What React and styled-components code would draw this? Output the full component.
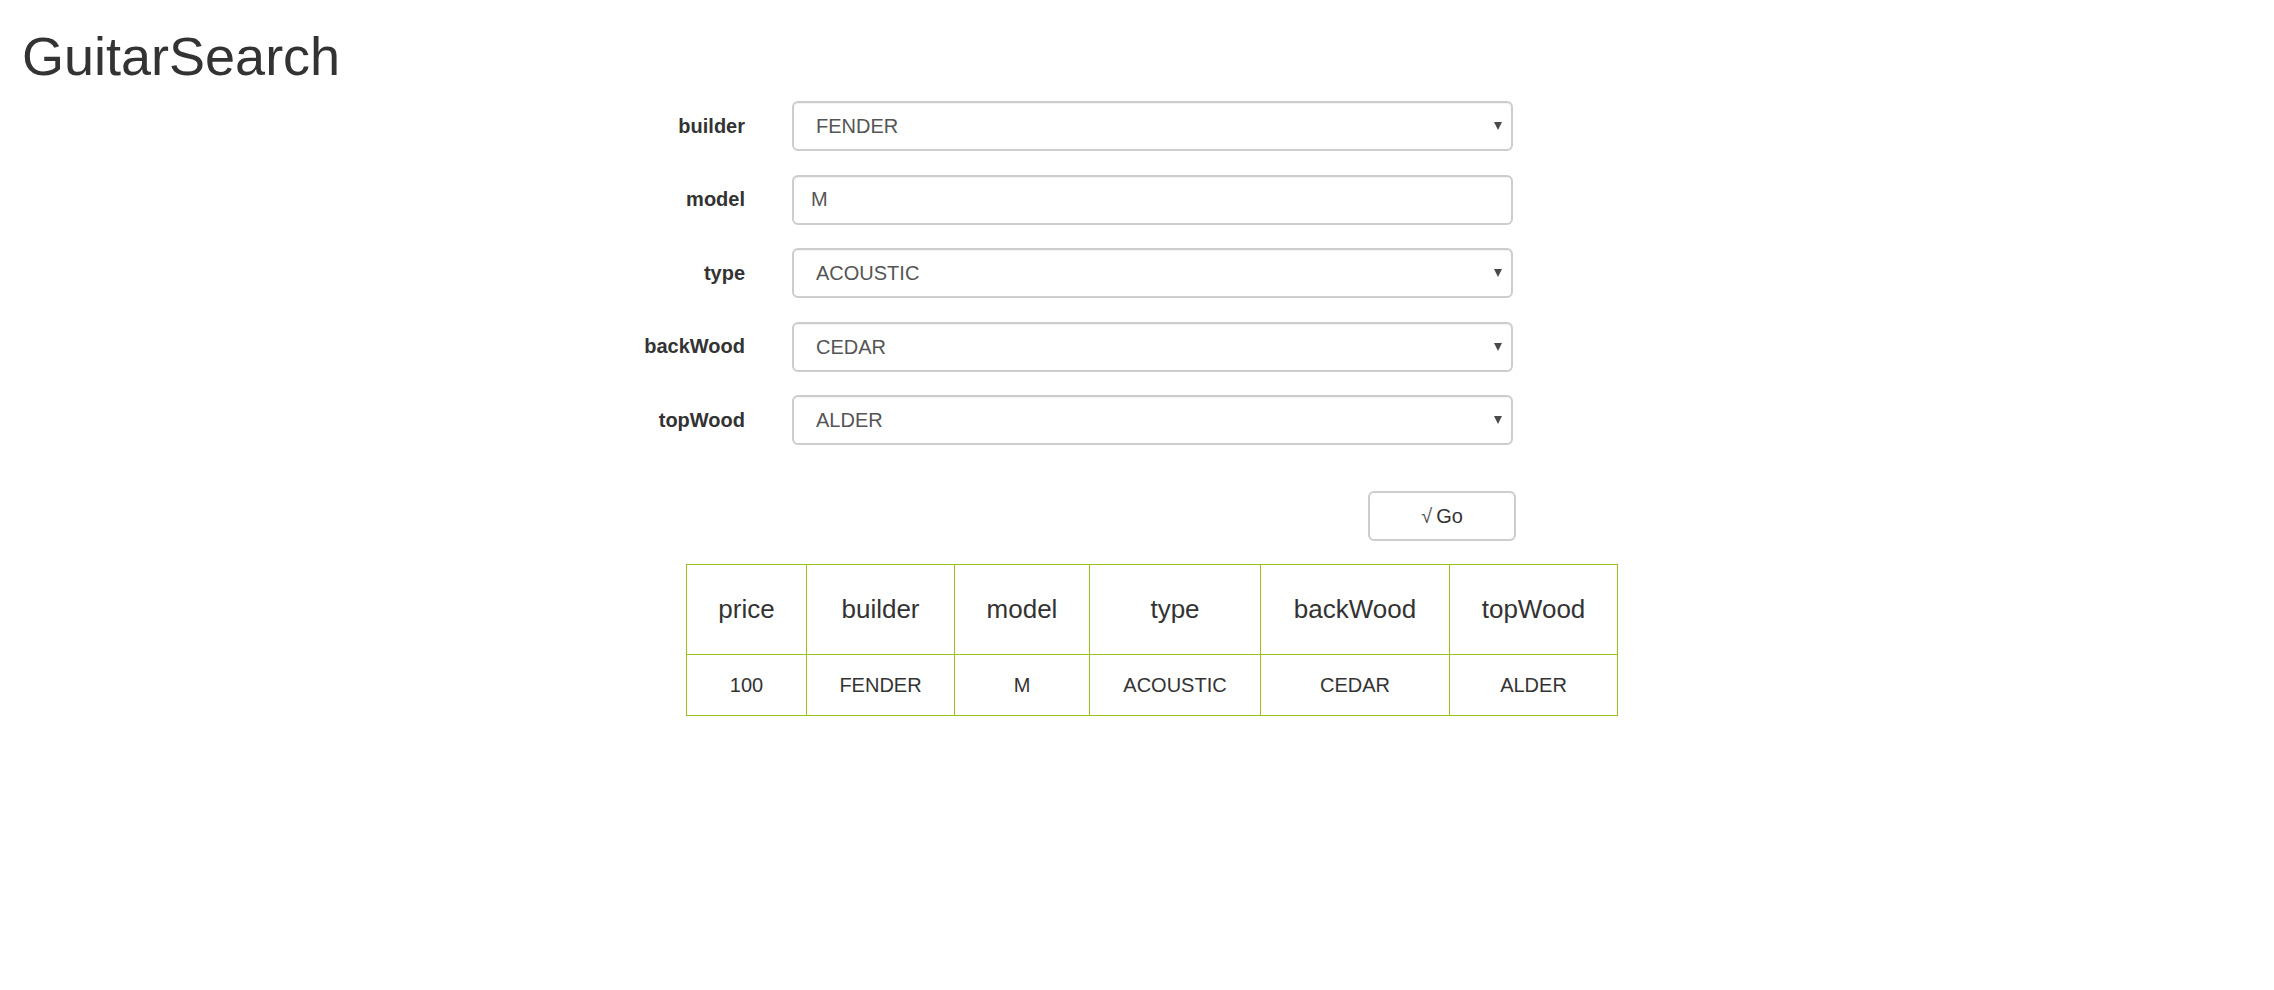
import React from "react";
import styled, { createGlobalStyle } from "styled-components";

const GlobalStyle = createGlobalStyle`
  html, body {
    margin: 0;
    padding: 0;
    background: #ffffff;
  }
  body {
    font-family: "Liberation Sans", Arial, Helvetica, sans-serif;
    color: #333333;
  }
  * { box-sizing: border-box; }
`;

const Page = styled.div`
  padding: 27px 0 40px 22px;
`;

const Title = styled.h1`
  margin: 0;
  font-size: 54px;
  line-height: 58px;
  font-weight: 400;
  color: #333333;
`;

const Content = styled.div`
  margin-top: 16px;
  margin-left: 578px;
  width: 916px;
  display: flex;
  flex-direction: column;
`;

const Form = styled.form`
  display: flex;
  flex-direction: column;
  gap: 23.6px;
`;

const Row = styled.div`
  display: flex;
  align-items: center;
  gap: 47px;
  height: 50px;
`;

const Label = styled.label`
  width: 145px;
  text-align: right;
  font-size: 20px;
  font-weight: 700;
  color: #333333;
`;

const fieldBase = `
  width: 721px;
  height: 50px;
  border: 2px solid #cdcdcd;
  border-radius: 6px;
  background: #ffffff;
  font-family: "Liberation Sans", Arial, Helvetica, sans-serif;
  font-size: 20px;
  color: #555555;
  outline: none;
  box-shadow: inset 0 1px 1px rgba(0, 0, 0, 0.06);
`;

const TextInput = styled.input`
  ${fieldBase}
  padding: 0 17px;
`;

const SelectWrap = styled.div`
  position: relative;
  width: 721px;
  height: 50px;
  &::after {
    content: "";
    position: absolute;
    right: 11px;
    top: 21px;
    width: 0;
    height: 0;
    border-left: 4.5px solid transparent;
    border-right: 4.5px solid transparent;
    border-top: 8px solid #4a4a4a;
    pointer-events: none;
  }
`;

const Select = styled.select`
  ${fieldBase}
  appearance: none;
  -webkit-appearance: none;
  padding: 0 40px 0 22px;
`;

const ButtonRow = styled.div`
  display: flex;
  justify-content: flex-end;
  margin-top: 46px;
`;

const GoButton = styled.button`
  width: 148px;
  height: 50px;
  border: 2px solid #cdcdcd;
  border-radius: 6px;
  background: #ffffff;
  font-family: "Liberation Sans", Arial, Helvetica, sans-serif;
  font-size: 20px;
  color: #333333;
  cursor: pointer;
`;

const Check = styled.span`
  color: #555555;
  margin-right: 4px;
`;

const Table = styled.table`
  align-self: flex-start;
  flex-shrink: 0;
  width: 931px;
  min-width: 931px;
  margin-top: 23px;
  margin-left: 86px;
  border-collapse: collapse;
  table-layout: fixed;
`;

const HeadCell = styled.th`
  width: ${(p) => p.$w}px;
  height: 90px;
  border: 1px solid #9bc21c;
  font-size: 26px;
  font-weight: 400;
  color: #333333;
  text-align: center;
  padding: 0;
`;

const Cell = styled.td`
  height: 61px;
  border: 1px solid #9bc21c;
  font-size: 20px;
  color: #333333;
  text-align: center;
  padding: 0;
`;

const fields = [
  { name: "builder", type: "select", value: "FENDER", options: ["FENDER", "MARTIN", "GIBSON", "COLLINGS", "OLSON", "RYAN", "PRS"] },
  { name: "model", type: "text", value: "M" },
  { name: "type", type: "select", value: "ACOUSTIC", options: ["ACOUSTIC", "ELECTRIC"] },
  { name: "backWood", type: "select", value: "CEDAR", options: ["CEDAR", "ALDER", "MAPLE", "MAHOGANY", "ROSEWOOD"] },
  { name: "topWood", type: "select", value: "ALDER", options: ["ALDER", "CEDAR", "MAPLE", "MAHOGANY", "ROSEWOOD"] },
];

const columns = [
  { key: "price", w: 120 },
  { key: "builder", w: 148 },
  { key: "model", w: 135 },
  { key: "type", w: 171 },
  { key: "backWood", w: 189 },
  { key: "topWood", w: 168 },
];

const results = [
  { price: "100", builder: "FENDER", model: "M", type: "ACOUSTIC", backWood: "CEDAR", topWood: "ALDER" },
];

export default function App() {
  return (
    <>
      <GlobalStyle />
      <Page>
        <Title>GuitarSearch</Title>
        <Content>
          <Form onSubmit={(e) => e.preventDefault()}>
            {fields.map((f) => (
              <Row key={f.name}>
                <Label htmlFor={f.name}>{f.name}</Label>
                {f.type === "text" ? (
                  <TextInput id={f.name} defaultValue={f.value} />
                ) : (
                  <SelectWrap>
                    <Select id={f.name} defaultValue={f.value}>
                      {f.options.map((o) => (
                        <option key={o} value={o}>
                          {o}
                        </option>
                      ))}
                    </Select>
                  </SelectWrap>
                )}
              </Row>
            ))}
          </Form>
          <ButtonRow>
            <GoButton type="button">
              <Check>√</Check>Go
            </GoButton>
          </ButtonRow>
          <Table>
            <colgroup>
              {columns.map((c) => (
                <col key={c.key} style={{ width: c.w }} />
              ))}
            </colgroup>
            <thead>
              <tr>
                {columns.map((c) => (
                  <HeadCell key={c.key} $w={c.w}>
                    {c.key}
                  </HeadCell>
                ))}
              </tr>
            </thead>
            <tbody>
              {results.map((r, i) => (
                <tr key={i}>
                  {columns.map((c) => (
                    <Cell key={c.key}>{r[c.key]}</Cell>
                  ))}
                </tr>
              ))}
            </tbody>
          </Table>
        </Content>
      </Page>
    </>
  );
}
